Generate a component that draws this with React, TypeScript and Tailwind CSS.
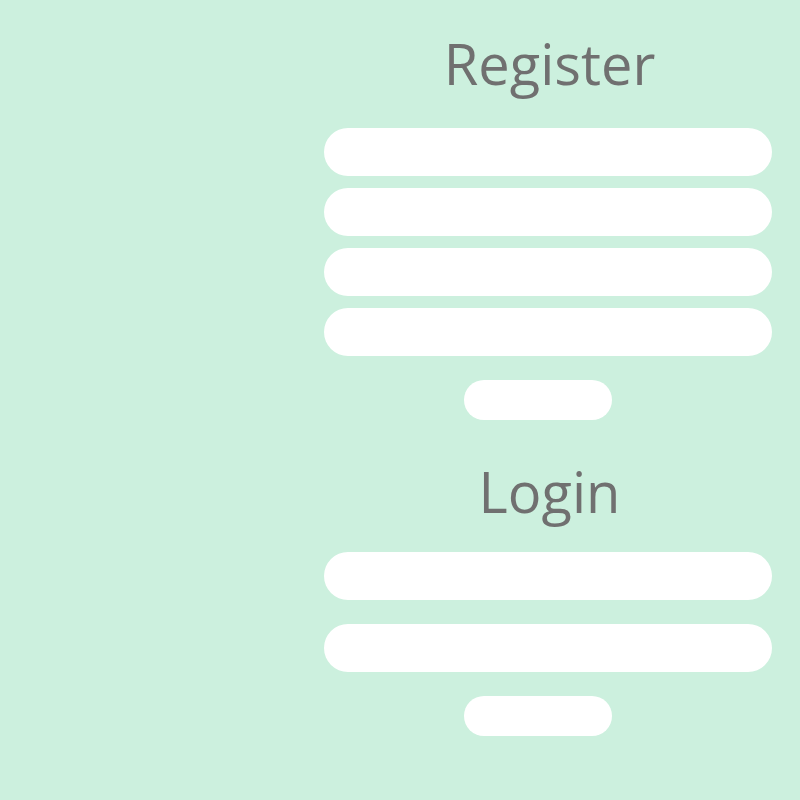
import React from 'react';

const Field: React.FC<{ type?: string; className?: string }> = ({ type = 'text', className = '' }) => (
  <input
    type={type}
    className={`block w-full h-[48px] rounded-full bg-white outline-none px-6 ${className}`}
  />
);

const App: React.FC = () => {
  return (
    <div className="w-[800px] h-[800px] bg-[#ccf0de] flex justify-end pr-[28px] font-['Open_Sans',sans-serif]">
      <div className="w-[448px] flex flex-col pt-[28px]">
        <h1 className="text-[56px] leading-[70px] h-[70px] text-center text-[#707070] pl-[3px]">Register</h1>
        <form className="flex flex-col gap-[12px] mt-[30px]">
          <Field />
          <Field type="email" />
          <Field type="password" />
          <Field type="password" />
        </form>
        <button className="block mt-[24px] ml-[140px] w-[148px] h-[40px] rounded-full bg-white" />

        <h1 className="text-[56px] leading-[70px] h-[70px] text-center text-[#707070] mt-[36px] pl-[3px]">Login</h1>
        <form className="flex flex-col gap-[24px] mt-[26px]">
          <Field />
          <Field type="password" />
        </form>
        <button className="block mt-[24px] ml-[140px] w-[148px] h-[40px] rounded-full bg-white" />
      </div>
    </div>
  );
};

export default App;
